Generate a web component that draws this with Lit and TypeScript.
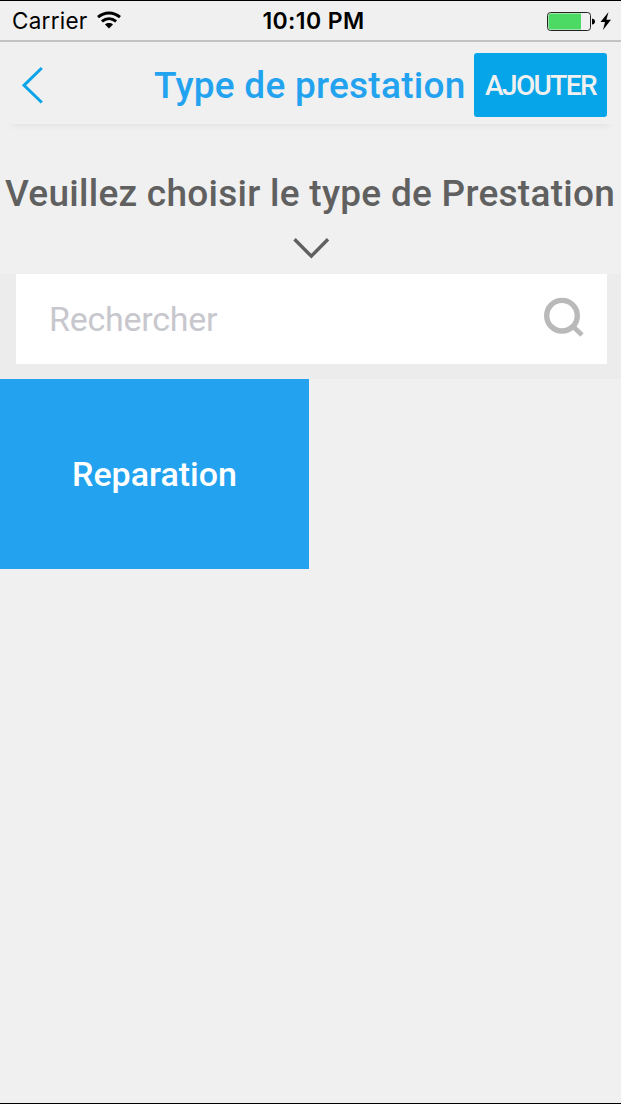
import { LitElement, html, css } from "lit";
import { customElement, property } from "lit/decorators.js";

@customElement("status-bar")
class StatusBar extends LitElement {
  static styles = css`
    :host { display: grid; grid-template-columns: 1fr auto 1fr; align-items: center; height: 41px; box-sizing: border-box;
      border-bottom: 2px solid #c3c3c3; padding: 0 9px 0 12px; color: #000; font: 22.5px/28px Inter, sans-serif; }
    .side { display: flex; align-items: center; }
    .carrier { letter-spacing: 0.25px; margin-right: 9px; }
    .time { font-weight: 600; font-size: 23px; letter-spacing: 0.4px; margin-left: 3px; }
    .right { justify-content: flex-end; }
    svg { display: block; }
    .wifi { margin-top: -2px; }
  `;
  render() {
    return html`
      <div class="side">
        <span class="carrier">Carrier</span>
        <svg class="wifi" width="24" height="18" viewBox="0 0 24 18" fill="none" stroke="#000" stroke-width="2.9">
          <path d="M1 6.2C7.5 0.6 16.5 0.6 23 6.2" />
          <path d="M4.9 10.4C9.2 6.8 14.8 6.8 19.1 10.4" />
          <path d="M12 17.5L8 13.4C10.3 11.5 13.7 11.5 16 13.4Z" fill="#000" stroke="none" />
        </svg>
      </div>
      <span class="time">10:10 PM</span>
      <div class="side right">
        <svg width="66" height="20" viewBox="0 0 66 20">
          <rect x="1.5" y="1.5" width="43" height="18" rx="3" fill="none" stroke="#222" />
          <path d="M4.5 2.5H35V18.5H4.5A2 2 0 0 1 2.5 16.5V4.5A2 2 0 0 1 4.5 2.5Z" fill="#4cd964" />
          <path d="M46 7.5Q49 8 49 10.5T46 13.5Z" />
          <path d="M62.5 1L54.5 11H59L57 19L65 8.8H60.4Z" />
        </svg>
      </div>
    `;
  }
}

@customElement("nav-header")
class NavHeader extends LitElement {
  @property() heading = "";
  @property() action = "";
  static styles = css`
    :host { display: flex; align-items: center; justify-content: space-between; height: 82px; margin: 0 5px; padding: 0 9px 0 16px;
      box-sizing: border-box; box-shadow: 0 7px 7px -6px rgba(0, 0, 0, 0.07); font-family: Roboto, sans-serif; }
    svg { display: block; margin-top: 4px; }
    .group { display: flex; align-items: center; gap: 8px; margin-top: 3px; }
    h1 { margin: 3px 0 0; width: 312px; white-space: nowrap; font-size: 37px; line-height: 44px; font-weight: 500; color: #23a3ef; letter-spacing: 0.25px; }
    button { width: 133px; height: 64px; padding: 2px 0 0; border: 0; border-radius: 3px; background: #06a4e8; color: #f0f0f0;
      font: 500 28px/32px Roboto, sans-serif; letter-spacing: -1.6px; white-space: nowrap; }
  `;
  render() {
    return html`
      <svg width="24" height="38" viewBox="0 0 24 38" fill="none" stroke="#0ba4e9" stroke-width="3">
        <path d="M20.8 2L3 19.3L20.8 36.5" />
      </svg>
      <div class="group">
        <h1>${this.heading}</h1>
        <button>${this.action}</button>
      </div>
    `;
  }
}

@customElement("app-root")
class AppRoot extends LitElement {
  static styles = css`
    :host { display: flex; flex-direction: column; width: 100%; height: 1104px; box-sizing: border-box; overflow: hidden;
      border-top: 1px solid #000; border-bottom: 1px solid #000; background: #f0f0f0; font-family: Roboto, sans-serif; }
    .intro { display: flex; flex-direction: column; align-items: center; height: 150px; box-sizing: border-box; padding-top: 48px; }
    h2 { margin: 0; width: 611px; white-space: nowrap; font-size: 37px; line-height: 44px; font-weight: 500; color: #606060; letter-spacing: 0.27px; }
    .intro svg { display: block; margin-top: 20px; }
    .search { height: 105px; box-sizing: border-box; padding: 0 14px 15px 16px; background: #ececec; }
    .field { display: flex; align-items: center; justify-content: space-between; height: 90px; box-sizing: border-box;
      padding: 0 22px 0 33px; background: #fff; }
    .field svg { margin-top: -2px; }
    .placeholder { font-size: 34px; line-height: 40px; color: #c7c7cd; letter-spacing: -0.25px; }
    .tiles { display: grid; grid-template-columns: 309px 1fr; }
    .tile { display: flex; align-items: center; justify-content: center; height: 190px; background: #23a3ef; color: #fff;
      font-size: 34px; line-height: 40px; font-weight: 500; }
  `;
  private tiles = ["Reparation"];
  render() {
    return html`
      <status-bar></status-bar>
      <nav-header heading="Type de prestation" action="AJOUTER"></nav-header>
      <section class="intro">
        <h2>Veuillez choisir le type de Prestation</h2>
        <svg width="38" height="24" viewBox="0 0 38 24" fill="none" stroke="#606060" stroke-width="3.4">
          <path d="M2.5 3.2L19.3 20.2L36 3.2" />
        </svg>
      </section>
      <div class="search">
        <div class="field">
          <span class="placeholder">Rechercher</span>
          <svg width="42" height="42" viewBox="0 0 42 42" fill="none" stroke="#b9b9b9" stroke-width="5.4">
            <circle cx="19" cy="18.7" r="15.3" />
            <path d="M29.5 29L39 38" stroke-width="4.8" />
          </svg>
        </div>
      </div>
      <div class="tiles">${this.tiles.map((t) => html`<div class="tile">${t}</div>`)}</div>
    `;
  }
}
